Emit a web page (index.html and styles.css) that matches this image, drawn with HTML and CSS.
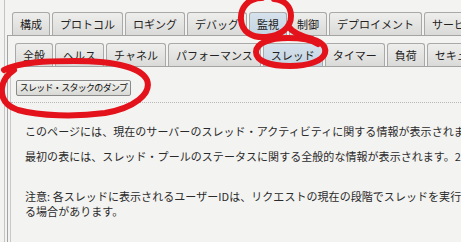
FILE: index.html
```html
<!DOCTYPE html>
<html lang="ja">
<head>
<meta charset="utf-8">
<link rel="stylesheet" href="styles.css">
</head>
<body>
<div class="window">
  <div class="tabs primary">
    <div class="tab">構成</div>
    <div class="tab">プロトコル</div>
    <div class="tab">ロギング</div>
    <div class="tab">デバッグ</div>
    <div class="tab active">監視</div>
    <div class="tab">制御</div>
    <div class="tab">デプロイメント</div>
    <div class="tab">サービス</div>
  </div>
  <div class="panel">
    <div class="tabs secondary">
      <div class="tab">全般</div>
      <div class="tab">ヘルス</div>
      <div class="tab">チャネル</div>
      <div class="tab">パフォーマンス</div>
      <div class="tab active">スレッド</div>
      <div class="tab">タイマー</div>
      <div class="tab">負荷</div>
      <div class="tab">セキュリティ</div>
    </div>
    <div class="content">
      <div class="toolbar">
        <button class="btn">スレッド・スタックのダンプ</button>
      </div>
      <div class="text">
        <p>このページには、現在のサーバーのスレッド・アクティビティに関する情報が表示されます。</p>
        <p class="wide">最初の表には、スレッド・プールのステータスに関する全般的な情報が表示されます。2番目の表には、</p>
        <p>注意: 各スレッドに表示されるユーザーIDは、リクエストの現在の段階でスレッドを実行しているユーザーとは異な<br>る場合があります。</p>
      </div>
    </div>
  </div>
</div>
<svg class="marks" width="461" height="242" viewBox="0 0 461 242">
  <path d="M262 -2 C248 -2 240 8 241 20 C242 32 252 38 266 37 C280 36 291 28 291 16 C291 6 284 0 274 -1 M288 26 C292 32 300 36 312 39" />
  <path d="M300 38 C318 38 327 45 325 53 C323 61 308 66 290 66 C270 66 256 61 256 52 C256 43 270 38 288 38 C300 38 312 40 318 44" />
  <path d="M4 70 C20 62 45 61 75 61 C110 61 140 66 147 80 C152 94 134 108 105 113 C75 117 40 116 18 110 C6 106 1 98 2 88 C3 80 8 74 14 70" />
</svg>
</body>
</html>
```

FILE: styles.css
```css
* { box-sizing: border-box; }

html, body {
  margin: 0;
  padding: 0;
}

body {
  width: 461px;
  height: 242px;
  overflow: hidden;
  background: #f3f3f1;
  font-family: "Noto Sans CJK JP", "DejaVu Sans", sans-serif;
  font-size: 11px;
  color: #222;
  position: relative;
}

.window {
  margin-left: 4px;
  height: 242px;
  border-left: 1px solid #c4c4c4;
  padding-top: 12px;
  overflow: hidden;
}

.tabs {
  display: flex;
  gap: 2px;
  overflow: hidden;
  white-space: nowrap;
}

.primary {
  padding-left: 7px;
}

.tab {
  flex-shrink: 0;
  height: 23px;
  line-height: 22px;
  padding: 0 7px;
  border: 1px solid #a9a9a9;
  border-bottom: none;
  border-radius: 3px 3px 0 0;
  background: linear-gradient(#eeeeec, #dadad8);
  color: #222;
}

.tab.active {
  background: linear-gradient(#d6e2ec, #c3d4e2);
}

.panel {
  margin-left: 2px;
  border-top: 1px solid #a4a4a4;
  border-left: 1px solid #a4a4a4;
  padding-top: 7px;
  height: 230px;
}

.secondary {
  padding-left: 7px;
}

.content {
  border-top: 1px solid #a4a4a4;
  margin-left: 2px;
  border-left: 1px solid #c8c8c8;
  height: 200px;
}

.toolbar {
  padding: 13px 0 6px 5px;
  border-bottom: 1px dotted #b8b8b8;
}

.btn {
  display: block;
  width: 115px;
  height: 16px;
  padding: 0;
  font-family: "Noto Sans CJK JP", "DejaVu Sans", sans-serif;
  font-size: 9px;
  letter-spacing: -0.7px;
  white-space: nowrap;
  line-height: 14px;
  color: #111;
  background: linear-gradient(#f4f4f2, #d8d8d4);
  border: 1px solid #8a8a8a;
  border-radius: 2px;
}

.text {
  padding: 21px 0 0 14px;
}

.text p {
  margin: 0 0 10px 0;
  line-height: 15px;
  font-size: 11px;
  letter-spacing: 0.05px;
  white-space: nowrap;
  color: #2a2a2a;
}

.text p.wide {
  margin-bottom: 25px;
}

.marks {
  position: absolute;
  left: 0;
  top: 0;
  pointer-events: none;
  fill: none;
  stroke: #e3121b;
  stroke-width: 6;
  stroke-linecap: round;
  stroke-linejoin: round;
}
```
